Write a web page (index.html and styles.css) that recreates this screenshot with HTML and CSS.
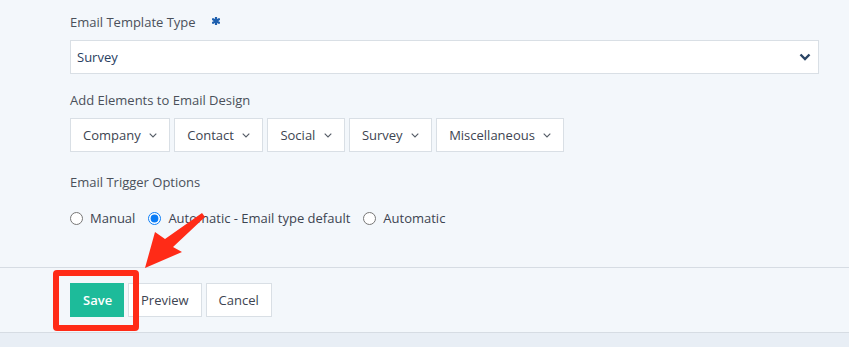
FILE: index.html
```html
<!DOCTYPE html>
<html lang="en">
<head>
  <meta charset="UTF-8">
  <title>Email Template</title>
  <link rel="stylesheet" href="styles.css">
</head>
<body>
  <!-- Form fields -->
  <div class="form-body">
    <div class="field-label">
      Email Template Type
      <svg class="required" width="8" height="8" viewBox="0 0 8 8">
        <path d="M4 0.5 V7.5 M1 2.2 L7 5.8 M7 2.2 L1 5.8" stroke="#1d5fae" stroke-width="2.2" stroke-linecap="round"/>
      </svg>
    </div>
    <div class="select-box">
      <span>Survey</span>
      <svg width="12" height="8" viewBox="0 0 12 8">
        <path d="M1.5 1.5 L6 6 L10.5 1.5" fill="none" stroke="#2a4565" stroke-width="2.4"/>
      </svg>
    </div>

    <div class="field-label spaced">Add Elements to Email Design</div>
    <div class="element-row">
      <div class="drop-btn">Company <svg width="8" height="5" viewBox="0 0 8 5"><path d="M0.7 0.7 L4 4 L7.3 0.7" fill="none" stroke="#555c66" stroke-width="1.1"/></svg></div>
      <div class="drop-btn">Contact <svg width="8" height="5" viewBox="0 0 8 5"><path d="M0.7 0.7 L4 4 L7.3 0.7" fill="none" stroke="#555c66" stroke-width="1.1"/></svg></div>
      <div class="drop-btn">Social <svg width="8" height="5" viewBox="0 0 8 5"><path d="M0.7 0.7 L4 4 L7.3 0.7" fill="none" stroke="#555c66" stroke-width="1.1"/></svg></div>
      <div class="drop-btn">Survey <svg width="8" height="5" viewBox="0 0 8 5"><path d="M0.7 0.7 L4 4 L7.3 0.7" fill="none" stroke="#555c66" stroke-width="1.1"/></svg></div>
      <div class="drop-btn">Miscellaneous <svg width="8" height="5" viewBox="0 0 8 5"><path d="M0.7 0.7 L4 4 L7.3 0.7" fill="none" stroke="#555c66" stroke-width="1.1"/></svg></div>
    </div>

    <div class="field-label trigger">Email Trigger Options</div>
    <div class="radio-row">
      <label class="radio"><input type="radio" name="trigger"> Manual</label>
      <label class="radio"><input type="radio" name="trigger" checked> Automatic - Email type default</label>
      <label class="radio"><input type="radio" name="trigger"> Automatic</label>
    </div>
  </div>

  <!-- Footer actions -->
  <div class="form-footer">
    <button class="btn btn-save">Save</button>
    <button class="btn">Preview</button>
    <button class="btn">Cancel</button>
  </div>
  <div class="bottom-strip"></div>

  <!-- Annotation overlay -->
  <div class="highlight-box"></div>
  <svg class="arrow" width="849" height="347" viewBox="0 0 849 347">
    <polygon points="145,268 155,232 165,239 202,213 205,217 173,247 182,252" fill="#ff2b17"/>
  </svg>
</body>
</html>
```

FILE: styles.css
```css
body {
  margin: 0;
  background: #f3f7fb;
  font-family: "Open Sans", "Liberation Sans", sans-serif;
  font-size: 13px;
  color: #4a505a;
  position: relative;
  width: 849px;
  height: 347px;
  overflow: hidden;
}

/* Form body */
.form-body {
  padding: 12px 30px 39px 70px;
  border-bottom: 1px solid #d6dce3;
}

.field-label {
  line-height: 20px;
  margin-bottom: 8px;
  display: flex;
  align-items: center;
}

.field-label.spaced {
  margin-top: 16px;
}

.field-label.trigger {
  margin-top: 20px;
}

.required {
  margin-left: 16px;
  margin-top: -2px;
}

.select-box {
  height: 32px;
  background: #fff;
  border: 1px solid #d9dfe5;
  display: flex;
  align-items: center;
  justify-content: space-between;
  padding: 0 7px 0 6px;
  color: #29405f;
}

.element-row {
  display: flex;
  gap: 4px;
}

.drop-btn {
  height: 32px;
  background: #fff;
  border: 1px solid #d9dfe5;
  display: flex;
  align-items: center;
  gap: 8.5px;
  padding: 0 12px;
  color: #3d4451;
}

.radio-row {
  margin-top: 16px;
  display: flex;
  gap: 13px;
  line-height: 20px;
}

.radio {
  display: flex;
  align-items: center;
  gap: 4px;
  color: #3d4451;
}

.radio input {
  margin: 0 3px 0 0;
  width: 13px;
  height: 13px;
  accent-color: #0a7cf5;
}

/* Footer */
.form-footer {
  padding: 15px 70px;
  display: flex;
  gap: 4px;
  border-bottom: 1px solid #d6dce3;
}

.btn {
  height: 34px;
  padding: 0 12px;
  font-family: inherit;
  font-size: 13px;
  color: #3d4451;
  background: #fff;
  border: 1px solid #d9dfe5;
}

.btn-save {
  background: #1dbb9a;
  border-color: #1dbb9a;
  color: #fff;
  font-weight: 600;
  padding: 0 12px;
  width: 54px;
}

.bottom-strip {
  height: 20px;
  background: #e8eef5;
}

/* Annotation */
.highlight-box {
  position: absolute;
  left: 53px;
  top: 270px;
  width: 74px;
  height: 49px;
  border: 6px solid #ff2b17;
  border-radius: 4px;
}

.arrow {
  position: absolute;
  left: 0;
  top: 0;
}
```
